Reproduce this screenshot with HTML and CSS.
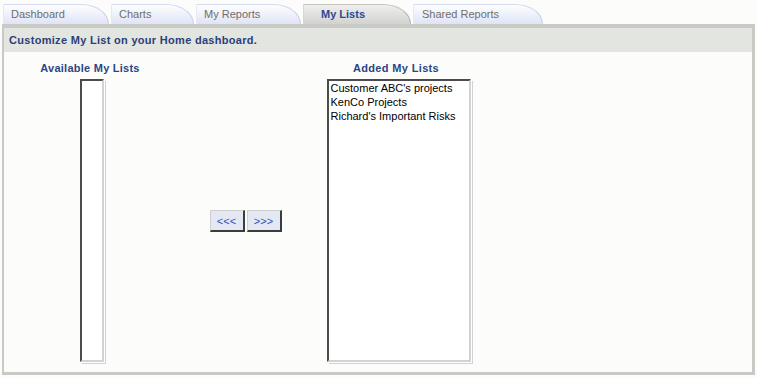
FILE: index.html
```html
<!DOCTYPE html>
<html lang="en">
<head>
  <meta charset="UTF-8">
  <title>My Lists</title>
  <link rel="stylesheet" href="styles.css">
</head>
<body>
  <!-- Tabs -->
  <div class="tabs">
    <div class="tab tab-dashboard">Dashboard</div>
    <div class="tab tab-charts">Charts</div>
    <div class="tab tab-reports">My Reports</div>
    <div class="tab tab-lists active">My Lists</div>
    <div class="tab tab-shared">Shared Reports</div>
  </div>

  <!-- Panel -->
  <div class="panel">
    <div class="panel-header">Customize My List on your Home dashboard.</div>
    <div class="panel-body">
      <div class="list-col left-col">
        <div class="list-title">Available My Lists</div>
        <div class="listbox narrow"></div>
      </div>

      <div class="move-col">
        <button class="move-btn">&lt;&lt;&lt;</button>
        <button class="move-btn">&gt;&gt;&gt;</button>
      </div>

      <div class="list-col right-col">
        <div class="list-title">Added My Lists</div>
        <div class="listbox wide">
          <div class="list-item">Customer ABC's projects</div>
          <div class="list-item">KenCo Projects</div>
          <div class="list-item">Richard's Important Risks</div>
        </div>
      </div>
    </div>
  </div>
</body>
</html>
```

FILE: styles.css
```css
/* General Reset */
* {
  margin: 0;
  padding: 0;
  box-sizing: border-box;
}

html, body {
  height: 100%;
  width: 100%;
  overflow: hidden;
}

body {
  font-family: 'Liberation Sans', Arial, sans-serif;
  font-size: 11px;
  background-color: #fcfdfb;
  color: black;
}

/* Tabs */
.tabs {
  display: flex;
  gap: 2px;
  padding: 4px 0 0 3px;
  height: 24px;
}

.tab {
  height: 20px;
  line-height: 19px;
  padding-left: 7px;
  white-space: nowrap;
  color: #6e6e6e;
  background: linear-gradient(#fefeff, #dfe3f6);
  border-top: 1px solid #d3d9ef;
  border-left: 1px solid #e6e9f5;
  border-right: 1px solid #c9d0ec;
  border-top-right-radius: 28px 20px;
}

.tab-dashboard { width: 106px; }
.tab-charts { width: 83px; }
.tab-reports { width: 105px; }
.tab-lists { width: 108px; }
.tab-shared { width: 130px; padding-left: 8px; }

.tab.active {
  padding-left: 17px;
  font-weight: bold;
  color: #2c4a92;
  background: linear-gradient(#efefed, #d2d2d0);
  border-top-color: #c4c4c0;
  border-left-color: #d6d6d2;
  border-right-color: #b4b4b0;
}

/* Panel */
.panel {
  margin: 0 2px;
  height: 351px;
  border-style: solid;
  border-color: #c8cac6;
  border-width: 4px 3px 3px 2px;
  display: flex;
  flex-direction: column;
}

.panel-header {
  height: 24px;
  line-height: 24px;
  padding-left: 5px;
  background-color: #e3e5e1;
  font-weight: bold;
  letter-spacing: 0.3px;
  color: #2b3f78;
}

.panel-body {
  flex: 1;
  display: flex;
  padding: 9px 0 0 4px;
  background-color: #fcfdfb;
}

/* Columns */
.list-col {
  display: flex;
  flex-direction: column;
  align-items: center;
}

.left-col {
  width: 168px;
}

.right-col {
  width: 161px;
}

.move-col {
  width: 142px;
  display: flex;
  justify-content: center;
  align-items: center;
  gap: 2px;
  padding: 17px 3px 0 0;
  height: 303px;
}

.list-title {
  line-height: 14px;
  margin-bottom: 4px;
  font-weight: bold;
  letter-spacing: 0.25px;
  color: #2b4584;
}

.right-col .list-title {
  letter-spacing: 0.35px;
  margin-left: -5px;
}

.left-col .list-title {
  margin-left: -4px;
}

/* List boxes */
.listbox {
  height: 283px;
  background-color: white;
  border: 2px solid;
  border-color: #4c4c4c #d2d2d2 #d2d2d2 #4c4c4c;
  box-shadow: 1px 1px 0 #fff, 2px 2px 0 #d2d2d2;
}

.listbox.narrow {
  width: 24px;
}

.listbox.wide {
  width: 144px;
  padding-left: 2px;
}

.list-item {
  line-height: 14px;
  white-space: nowrap;
}

/* Move buttons */
.move-btn {
  width: 35px;
  height: 22px;
  font-family: inherit;
  font-size: 11px;
  color: #2e52b0;
  background-color: #e3e8f4;
  border-style: solid;
  border-width: 1px 2px 2px 1px;
  border-color: #cfcfcf #3c3c3c #3c3c3c #cfcfcf;
  cursor: pointer;
}
```
